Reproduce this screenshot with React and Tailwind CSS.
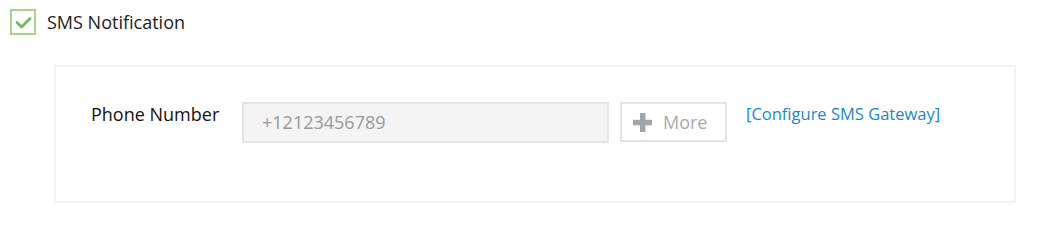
import React from "react";

export default function App() {
  return (
    <div className="w-[1047px] h-[229px] bg-white" style={{ fontFamily: '"Open Sans", sans-serif' }}>
      <div className="flex items-center pt-[9px] pl-[10px]">
        <div className="w-[26px] h-[26px] border-2 border-[#a6d38e] flex items-center justify-center">
          <svg width="17" height="13" viewBox="0 0 17 13">
            <path d="M2 6.5 L6.5 11 L15 2.5" fill="none" stroke="#72bb5b" strokeWidth="2.8" strokeLinecap="round" strokeLinejoin="round" />
          </svg>
        </div>
        <span className="ml-[11px] text-[18px] text-[#222] leading-[24px]">SMS Notification</span>
      </div>
      <div className="ml-[54px] mt-[30px] w-[962px] h-[138px] border-2 border-[#f2f2f2] flex items-start pt-[35px]">
        <div className="ml-[35px] w-[151px] text-[18px] text-[#111] leading-[24px]">Phone Number</div>
        <div className="w-[367px] h-[41px] bg-[#f4f4f4] border-2 border-[#e2e6e6] flex items-center pl-[18px] text-[18px] text-[#999]">
          +12123456789
        </div>
        <div className="ml-[11px] w-[107px] h-[40px] border-2 border-[#e4e4e4] flex items-center pl-[11px] text-[18px] text-[#aaa]">
          <svg width="19" height="19" viewBox="0 0 19 19">
            <rect x="7" y="0" width="5.5" height="19" fill="#9ea7aa" />
            <rect x="0" y="6.8" width="19" height="5.5" fill="#9ea7aa" />
          </svg>
          <span className="ml-[11px]">More</span>
        </div>
        <a className="ml-[19px] text-[16.5px] text-[#1b87c4] leading-[24px]">[Configure SMS Gateway]</a>
      </div>
    </div>
  );
}
